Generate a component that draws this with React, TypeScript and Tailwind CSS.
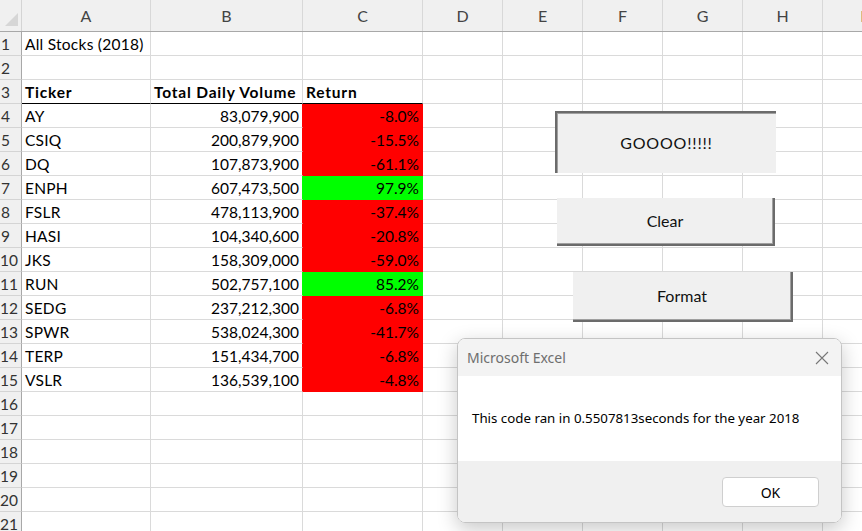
import React from "react";

const cols = [
  { key: "A", w: "w-[129px]" },
  { key: "B", w: "w-[152px]" },
  { key: "C", w: "w-[120px]" },
  { key: "D", w: "w-[80px]" },
  { key: "E", w: "w-[80px]" },
  { key: "F", w: "w-[80px]" },
  { key: "G", w: "w-[80px]" },
  { key: "H", w: "w-[80px]" },
  { key: "I", w: "w-[80px]" },
];

const stocks = [
  ["AY", "83,079,900", "-8.0%"],
  ["CSIQ", "200,879,900", "-15.5%"],
  ["DQ", "107,873,900", "-61.1%"],
  ["ENPH", "607,473,500", "97.9%"],
  ["FSLR", "478,113,900", "-37.4%"],
  ["HASI", "104,340,600", "-20.8%"],
  ["JKS", "158,309,000", "-59.0%"],
  ["RUN", "502,757,100", "85.2%"],
  ["SEDG", "237,212,300", "-6.8%"],
  ["SPWR", "538,024,300", "-41.7%"],
  ["TERP", "151,434,700", "-6.8%"],
  ["VSLR", "136,539,100", "-4.8%"],
];

type Cell = { text?: string; bold?: boolean; right?: boolean; fill?: string };

function rowCells(n: number): Cell[] {
  if (n === 1) return [{ text: "All Stocks (2018)" }];
  if (n === 3)
    return [
      { text: "Ticker", bold: true },
      { text: "Total Daily Volume", bold: true },
      { text: "Return", bold: true },
    ];
  const s = stocks[n - 4];
  if (s) {
    const up = !s[2].startsWith("-");
    return [
      { text: s[0] },
      { text: s[1], right: true },
      { text: s[2], right: true, fill: up ? "green" : "red" },
    ];
  }
  return [];
}

function SheetRow({ n }: { n: number }) {
  const cells = rowCells(n);
  return (
    <div className="flex h-[24px]">
      <div className="w-[22px] shrink-0 bg-[#f0f0f0] border-r border-b border-r-[#a8a8a8] border-b-[#d4d4d4] flex items-end pb-[2px] leading-[18px] text-[15.5px] text-[#333]">
        <span className="w-[11px] text-center whitespace-nowrap">{n}</span>
      </div>
      {cols.map((c, i) => {
        const cell = cells[i] ?? {};
        const next = cells[i + 1];
        const fillCls =
          cell.fill === "red"
            ? "bg-[#ff0000] border-r-[#ff0000] border-b-[#ff0000]"
            : cell.fill === "green"
            ? "bg-[#00ff00] border-r-[#00ff00] border-b-[#00ff00]"
            : "";
        const nextFill =
          next?.fill === "red"
            ? "border-r-[#ff0000]"
            : next?.fill === "green"
            ? "border-r-[#00ff00]"
            : "";
        const thick = n === 3 && i < 3 ? "border-b-black" : "";
        const spacing = cell.bold
          ? "font-bold tracking-[0.8px]"
          : cell.right
          ? ""
          : "tracking-[0.25px]";
        return (
          <div
            key={c.key}
            className={`${c.w} shrink-0 border-r border-b border-[#dadada] flex items-end pb-[2px] px-[3px] leading-[18px] text-[15.5px] text-black whitespace-nowrap ${
              cell.right ? "justify-end" : ""
            } ${spacing} ${fillCls} ${nextFill} ${thick}`}
          >
            {cell.text}
          </div>
        );
      })}
    </div>
  );
}

function SheetButton({
  label,
  className,
  raised,
}: {
  label: string;
  className: string;
  raised?: boolean;
}) {
  return (
    <div
      className={`absolute bg-[#f0f0f0] flex items-center justify-center text-[16px] text-[#111] ${
        raised
          ? "border-r-2 border-b-2 border-[#6b6b6b] shadow-[inset_-1px_-1px_0_#a0a0a0]"
          : "border-t-2 border-l-2 border-[#6b6b6b] shadow-[inset_1px_1px_0_#a0a0a0]"
      } ${className}`}
    >
      {label}
    </div>
  );
}

export default function App() {
  const rows = Array.from({ length: 21 }, (_, i) => i + 1);
  return (
    <div className="relative w-[862px] h-[531px] overflow-hidden bg-white font-['Lato',sans-serif]">
      <div className="flex h-[32px] bg-[#f0f0f0] border-b border-[#a8a8a8]">
        <div className="w-[22px] shrink-0 border-r border-[#d4d4d4] relative">
          <div className="absolute left-[5px] top-[13px] w-0 h-0 border-l-[13px] border-l-transparent border-b-[13px] border-b-[#d6d6d6]" />
        </div>
        {cols.map((c) => (
          <div
            key={c.key}
            className={`${c.w} shrink-0 border-r border-[#d8d8d8] flex items-end justify-center pb-[3px] text-[16px] text-[#444]`}
          >
            {c.key}
          </div>
        ))}
      </div>
      {rows.map((n) => (
        <SheetRow key={n} n={n} />
      ))}

      <SheetButton
        label="GOOOO!!!!!"
        className="left-[555px] top-[111px] w-[221px] h-[62px] tracking-[0.8px]"
      />
      <SheetButton label="Clear" raised className="left-[557px] top-[198px] w-[218px] h-[48px]" />
      <SheetButton label="Format" raised className="left-[573px] top-[272px] w-[220px] h-[50px]" />

      <div className="absolute left-[457px] top-[338px] w-[385px] h-[185px] rounded-[8px] border border-[#c4c4c4] overflow-hidden shadow-[0_6px_20px_rgba(0,0,0,0.22)] flex flex-col font-['Noto_Sans',sans-serif]">
        <div className="h-[37px] bg-[#f3f3f3] flex items-center justify-between pl-[9px] pr-[12px]">
          <span className="text-[14px] text-[#6e6e6e]">Microsoft Excel</span>
          <svg width="14" height="14" viewBox="0 0 14 14" className="text-[#777]">
            <path d="M1 1 L13 13 M13 1 L1 13" stroke="currentColor" strokeWidth="1.1" />
          </svg>
        </div>
        <div className="h-[85px] bg-white flex items-center pl-[14px] text-[13.3px] text-black">
          This code ran in 0.5507813seconds for the year 2018
        </div>
        <div className="flex-1 bg-[#f0f0f0] flex items-start justify-end pt-[16px] pr-[22px]">
          <div className="w-[97px] h-[30px] bg-white border border-[#cfcfcf] rounded-[4px] flex items-center justify-center text-[14px] text-black">
            OK
          </div>
        </div>
      </div>
    </div>
  );
}
